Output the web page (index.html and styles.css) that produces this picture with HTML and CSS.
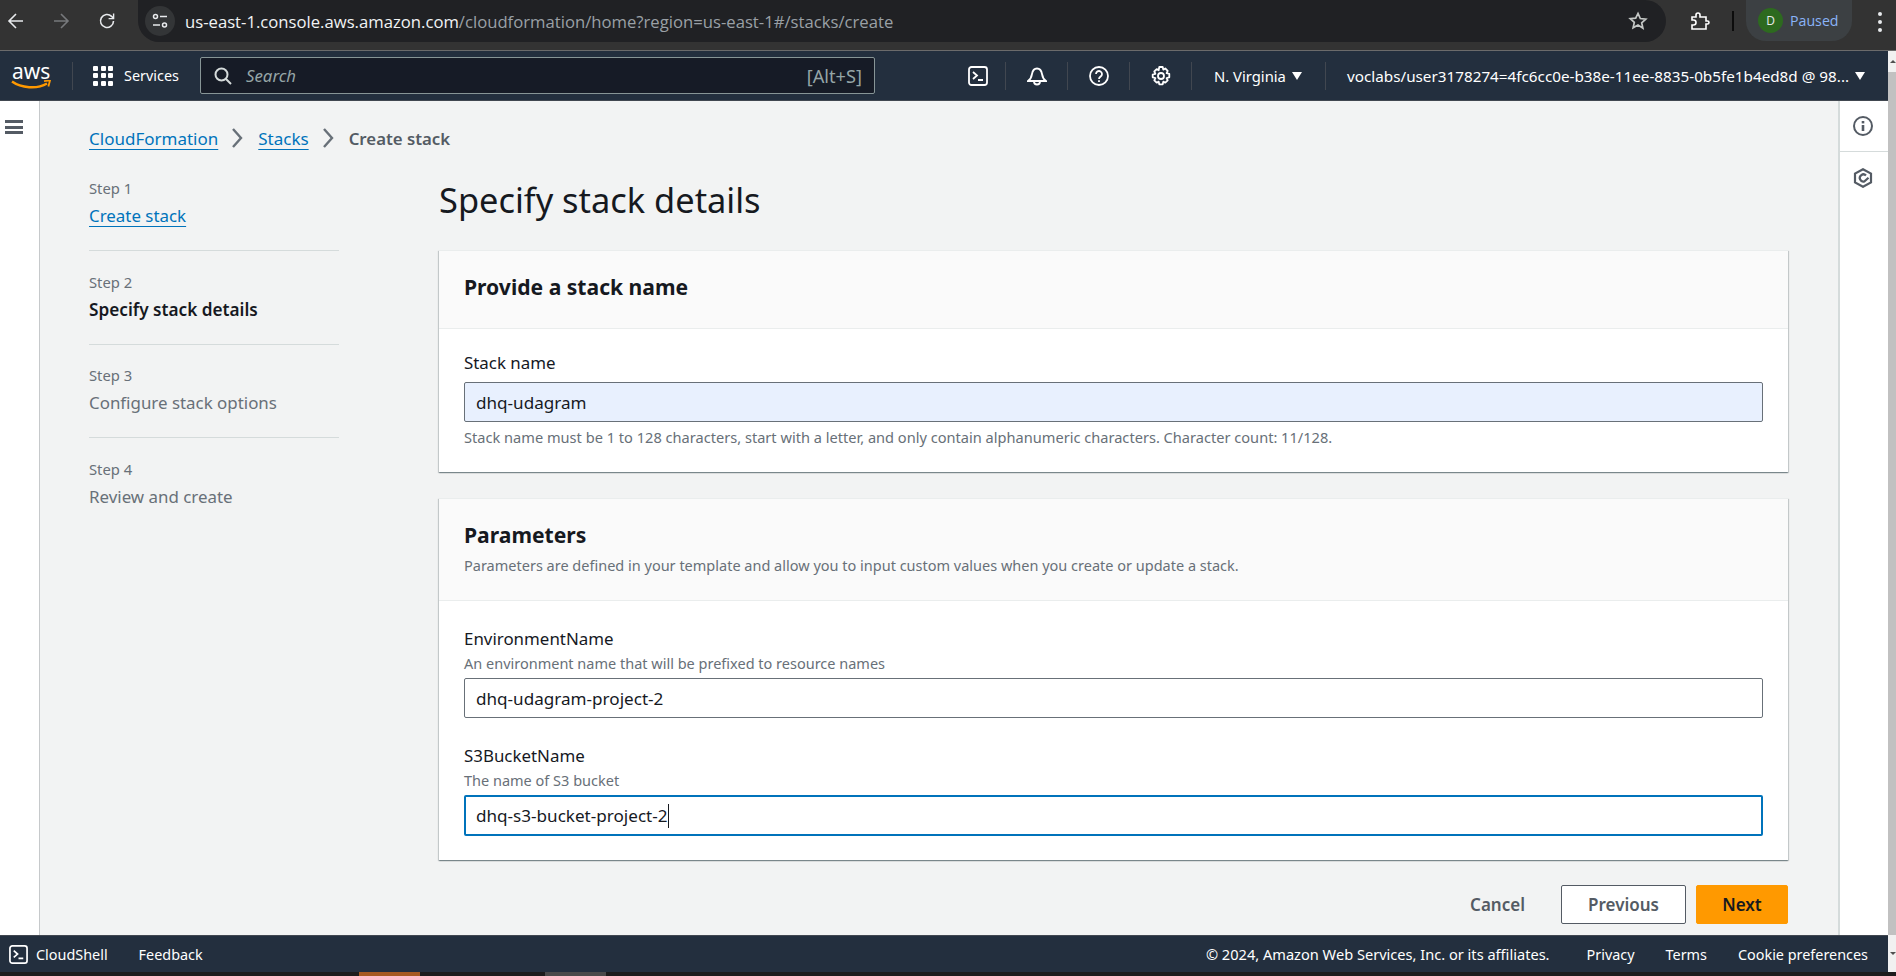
FILE: index.html
```html
<!doctype html>
<html lang="en">
    <head>
        <meta charset="UTF-8" />
        <meta name="viewport" content="width=device-width, initial-scale=1.0" />
        <title>CloudFormation - Create stack</title>
        <link rel="stylesheet" href="styles.css">
    </head>
    <body>
        <!-- browser toolbar -->
        <div class="browser-bar">
            <div class="browser-btn">
                <svg width="18" height="18" viewBox="0 0 18 18" fill="none" stroke="#e8eaed" stroke-width="1.6"><path d="M16 9H2M9 2L2 9l7 7"/></svg>
            </div>
            <div class="browser-btn">
                <svg width="18" height="18" viewBox="0 0 18 18" fill="none" stroke="#77797c" stroke-width="1.6"><path d="M2 9h14M9 2l7 7-7 7"/></svg>
            </div>
            <div class="browser-btn">
                <svg width="18" height="18" viewBox="0 0 18 18" fill="none" stroke="#e8eaed" stroke-width="1.6"><path d="M15.5 9A6.5 6.5 0 1 1 13.6 4.4L15.5 6.2"/><path d="M15.6 1.6v5h-5" stroke-width="1.4"/></svg>
            </div>
            <div class="url-pill">
                <div class="site-icon">
                    <svg width="18" height="18" viewBox="0 0 18 18" fill="none" stroke="#e8eaed" stroke-width="1.5"><circle cx="4.5" cy="4.5" r="2"/><path d="M9 4.5h7M2 13h7"/><circle cx="13.5" cy="13" r="2"/></svg>
                </div>
                <div class="url"><span class="url-host">us-east-1.console.aws.amazon.com</span>/cloudformation/home?region=us-east-1#/stacks/create</div>
                <svg class="star" width="20" height="20" viewBox="0 0 20 20" fill="none" stroke="#c4c7c5" stroke-width="1.7"><path d="M10 2.4l2.3 5.1 5.5.6-4.1 3.7 1.2 5.4L10 14.1l-4.9 2.7 1.2-5.4-4.1-3.7 5.5-.6z"/></svg>
            </div>
            <svg class="ext-icon" width="20" height="20" viewBox="0 0 20 20" fill="none" stroke="#fff" stroke-width="1.6"><path d="M2 6h4V4a2 2 0 0 1 4 0v2h6v4h1.5a1.5 1.5 0 0 1 0 3H16v5H2v-4h1.5a2.5 2.5 0 0 0 0-5H2z"/></svg>
            <div class="bar-divider"></div>
            <div class="profile">
                <div class="avatar">D</div>
                <span>Paused</span>
            </div>
            <div class="browser-menu"><i></i><i></i><i></i></div>
        </div>

        <div class="window">
            <div class="app">
                <!-- console top nav -->
                <header class="topnav">
                    <div class="logo">
                        <span class="logo-text">aws</span>
                        <svg width="40" height="10" viewBox="0 0 40 10" fill="none"><path d="M1 1.5C10 8 26 9.5 36 3.5" stroke="#f90" stroke-width="2.4"/><path d="M33 1.2l6-.8-1.6 6" stroke="#f90" stroke-width="1.8"/></svg>
                    </div>
                    <div class="services">
                        <div class="grid-icon"><i></i><i></i><i></i><i></i><i></i><i></i><i></i><i></i><i></i></div>
                        <span>Services</span>
                    </div>
                    <div class="search">
                        <svg width="18" height="18" viewBox="0 0 18 18" fill="none" stroke="#d5dbdb" stroke-width="2"><circle cx="7.5" cy="7.5" r="6"/><path d="M12 12l5 5"/></svg>
                        <span class="search-text">Search</span>
                        <span class="search-key">[Alt+S]</span>
                    </div>
                    <div class="nav-icon first">
                        <svg width="20" height="20" viewBox="0 0 20 20" fill="none" stroke="#fff" stroke-width="1.8"><rect x="1" y="1" width="18" height="18" rx="2.5"/><path d="M5 6l4 3.5L5 13M10 14h5"/></svg>
                    </div>
                    <div class="nav-icon">
                        <svg width="20" height="20" viewBox="0 0 20 20" fill="none" stroke="#fff" stroke-width="1.8"><path d="M1 15h18c-3-2-3.500-4-4-7-.5-3-2-5.500-5-5.500S5.500 5 5 8c-.5 3-1 5-4 7z"/><path d="M7 15.500a3 3 0 0 0 6 0"/></svg>
                    </div>
                    <div class="nav-icon">
                        <svg width="20" height="20" viewBox="0 0 20 20" fill="none" stroke="#fff" stroke-width="1.8"><circle cx="10" cy="10" r="9"/><path d="M7 8a3 3 0 1 1 4.500 2.600c-1 .6-1.500 1.100-1.500 2.400"/><path d="M10 14.300v1.700"/></svg>
                    </div>
                    <div class="nav-icon">
                        <svg width="20" height="20" viewBox="0 0 20 20" fill="none" stroke="#fff" stroke-width="1.8"><circle cx="10" cy="10" r="3"/><path d="M8.300 1h3.400l.6 2.600 2-1.100 2.400 2.400-1.100 2.300 2.700.7v3.400l-2.700.7 1.100 2.300-2.400 2.400-2-1.100-.6 2.700H8.300l-.6-2.700-2 1.100-2.400-2.400 1.100-2.300-2.700-.7V8.500l2.700-.7-1.100-2.300 2.400-2.400 2 1.100z" stroke-linejoin="round"/></svg>
                    </div>
                    <div class="nav-menu region">N. Virginia <span class="caret-down"></span></div>
                    <div class="nav-menu user"><span class="user-name">voclabs/user3178274=4fc6cc0e-b38e-11ee-8835-0b5fe1b4ed8d @ 98...</span> <span class="caret-down"></span></div>
                </header>

                <div class="main">
                    <div class="left-rail">
                        <div class="hamburger"><i></i><i></i><i></i></div>
                    </div>

                    <div class="content">
                        <nav class="breadcrumbs">
                            <a href="#">CloudFormation</a>
                            <svg width="16" height="22" viewBox="0 0 16 22" fill="none" stroke="#687078" stroke-width="2.400"><path d="M3 2l8 9-8 9"/></svg>
                            <a href="#">Stacks</a>
                            <svg width="16" height="22" viewBox="0 0 16 22" fill="none" stroke="#687078" stroke-width="2.400"><path d="M3 2l8 9-8 9"/></svg>
                            <span class="crumb-current">Create stack</span>
                        </nav>

                        <div class="wizard">
                            <ul class="steps">
                                <li class="step">
                                    <div class="step-num">Step 1</div>
                                    <a class="step-name" href="#">Create stack</a>
                                </li>
                                <li class="step">
                                    <div class="step-num">Step 2</div>
                                    <div class="step-name active">Specify stack details</div>
                                </li>
                                <li class="step">
                                    <div class="step-num">Step 3</div>
                                    <div class="step-name">Configure stack options</div>
                                </li>
                                <li class="step">
                                    <div class="step-num">Step 4</div>
                                    <div class="step-name">Review and create</div>
                                </li>
                            </ul>

                            <div class="form-col">
                                <h1>Specify stack details</h1>

                                <section class="card">
                                    <div class="card-header name-header">
                                        <h2>Provide a stack name</h2>
                                    </div>
                                    <div class="card-body first-body">
                                        <div class="field">
                                            <label>Stack name</label>
                                            <div class="input autofill">dhq-udagram</div>
                                            <div class="hint">Stack name must be 1 to 128 characters, start with a letter, and only contain alphanumeric characters. Character count: 11/128.</div>
                                        </div>
                                    </div>
                                </section>

                                <section class="card params">
                                    <div class="card-header">
                                        <h2>Parameters</h2>
                                        <p class="card-desc">Parameters are defined in your template and allow you to input custom values when you create or update a stack.</p>
                                    </div>
                                    <div class="card-body">
                                        <div class="field">
                                            <label>EnvironmentName</label>
                                            <div class="field-desc">An environment name that will be prefixed to resource names</div>
                                            <div class="input">dhq-udagram-project-2</div>
                                        </div>
                                        <div class="field">
                                            <label>S3BucketName</label>
                                            <div class="field-desc">The name of S3 bucket</div>
                                            <div class="input focused"><span class="typed">dhq-s3-bucket-project-2</span></div>
                                        </div>
                                    </div>
                                </section>

                                <div class="actions">
                                    <button class="btn-link">Cancel</button>
                                    <button class="btn-normal">Previous</button>
                                    <button class="btn-primary">Next</button>
                                </div>
                            </div>
                        </div>
                    </div>

                    <aside class="right-rail">
                        <div class="rail-item">
                            <svg width="20" height="20" viewBox="0 0 20 20" fill="none" stroke="#545b64" stroke-width="2"><circle cx="10" cy="10" r="9"/><path d="M10 9v6" stroke-width="2.600"/><path d="M10 5v2.400" stroke-width="2.600"/></svg>
                        </div>
                        <div class="rail-item">
                            <svg width="20" height="20" viewBox="0 0 20 20" fill="none" stroke="#545b64" stroke-width="2.200"><path d="M10 1.200l8 4.400v8.800l-8 4.400-8-4.400V5.600z"/><path d="M13 7.500A3.600 3.600 0 1 0 11.500 13.400L15.500 9.800"/></svg>
                        </div>
                    </aside>
                </div>

                <footer class="footer">
                    <svg width="19" height="19" viewBox="0 0 20 20" fill="none" stroke="#fff" stroke-width="1.800"><rect x="1" y="1" width="18" height="18" rx="2.500"/><path d="M5 6l4 3.500L5 13M10 14h5"/></svg>
                    <span class="cloudshell">CloudShell</span>
                    <span class="feedback">Feedback</span>
                    <span class="copyright">© 2024, Amazon Web Services, Inc. or its affiliates.</span>
                    <span class="foot-link">Privacy</span>
                    <span class="foot-link">Terms</span>
                    <span class="foot-link">Cookie preferences</span>
                </footer>
            </div>

            <div class="scrollbar">
                <div class="scroll-arrow"><span class="arrow-up"></span></div>
                <div class="scroll-thumb"></div>
                <div class="scroll-arrow bottom"><span class="arrow-down"></span></div>
            </div>
        </div>

        <div class="taskbar">
            <div class="task orange"></div>
            <div class="task grey"></div>
        </div>
    </body>
</html>
```

FILE: styles.css
```css
* {
    box-sizing: border-box;
}
html,
body {
    height: 100%;
}
body {
    margin: 0;
    height: 976px;
    overflow: hidden;
    display: flex;
    flex-direction: column;
    font-family: "Noto Sans", sans-serif;
    font-size: 16.9px;
    color: #16191f;
    background: #f2f3f3;
}

/* browser toolbar */
.browser-bar {
    height: 51px;
    flex: none;
    display: flex;
    align-items: flex-start;
    background: #333333;
    border-bottom: 1px solid #6b6b6b;
    font-family: "Open Sans", sans-serif;
}
.browser-btn {
    width: 46px;
    height: 42px;
    display: flex;
    align-items: center;
    justify-content: center;
    flex: none;
}
.browser-btn:first-child {
    width: 32px;
    margin-right: 6px;
}
.url-pill {
    width: 1528px;
    height: 42px;
    margin-left: 8px;
    padding-left: 7px;
    display: flex;
    align-items: center;
    flex: none;
    background: #202124;
    border-radius: 0 21px 21px 21px;
}
.site-icon {
    width: 30px;
    height: 30px;
    border-radius: 50%;
    background: #333537;
    display: flex;
    align-items: center;
    justify-content: center;
    flex: none;
}
.url {
    margin-left: 10px;
    font-size: 16.680px;
    color: #9aa0a6;
    white-space: nowrap;
}
.url-host {
    color: #f1f3f4;
}
.star {
    margin-left: auto;
    margin-right: 18px;
}
.ext-icon {
    margin: 11px 0 0 24px;
    flex: none;
}
.bar-divider {
    width: 2px;
    height: 20px;
    margin: 11px 0 0 22px;
    background: #0c0c0c;
    flex: none;
}
.profile {
    width: 106px;
    height: 41px;
    margin-left: 12px;
    padding-left: 12px;
    display: flex;
    align-items: center;
    gap: 7px;
    flex: none;
    background: #3c4043;
    border-radius: 0 0 20px 20px;
    color: #8ab4f8;
    font-size: 14.200px;
}
.avatar {
    width: 25px;
    height: 25px;
    border-radius: 50%;
    background: #2d6a1f;
    color: #e8eaed;
    font-size: 12px;
    text-align: center;
    line-height: 25px;
}
.browser-menu {
    margin: 12px 0 0 26px;
    display: flex;
    flex-direction: column;
    gap: 4px;
}
.browser-menu i {
    width: 4px;
    height: 4px;
    border-radius: 50%;
    background: #e8eaed;
}

/* console frame */
.window {
    flex: 1;
    display: flex;
    min-height: 0;
}
.app {
    flex: 1;
    min-width: 0;
    display: flex;
    flex-direction: column;
}
.scrollbar {
    width: 8px;
    flex: none;
    display: flex;
    flex-direction: column;
    background: #f1f1f1;
}
.scroll-arrow {
    height: 21px;
    display: flex;
    align-items: center;
    justify-content: flex-end;
}
.scroll-arrow.bottom {
    flex: 1;
}
.arrow-up {
    border-left: 3px solid transparent;
    border-right: 3px solid transparent;
    border-bottom: 3px solid #505050;
}
.arrow-down {
    border-left: 3px solid transparent;
    border-right: 3px solid transparent;
    border-top: 3px solid #505050;
}
.scroll-thumb {
    height: 863px;
    background: #c1c1c1;
}

/* top nav */
.topnav {
    height: 50px;
    flex: none;
    display: flex;
    align-items: center;
    background: #232f3e;
    border-bottom: 1px solid #414750;
    color: #fff;
    font-size: 14.400px;
    white-space: nowrap;
}
.logo {
    width: 73px;
    height: 28px;
    padding-left: 11px;
    border-right: 1px solid #414750;
    display: flex;
    flex-direction: column;
    flex: none;
}
.logo-text {
    font-size: 21px;
    line-height: 18px;
    margin-left: 1px;
}
.services {
    width: 127px;
    display: flex;
    align-items: center;
    gap: 11px;
    padding-left: 20px;
    flex: none;
}
.grid-icon {
    display: grid;
    grid-template-columns: repeat(3, 5px);
    grid-auto-rows: 5px;
    gap: 2.500px;
}
.grid-icon i {
    background: #fff;
    border-radius: 1px;
}
.search {
    width: 675px;
    height: 37px;
    padding: 0 12px 0 13px;
    display: flex;
    align-items: center;
    flex: none;
    background: #161b26;
    border: 1px solid #879596;
    border-radius: 2px;
    color: #95a5a6;
    font-size: 16.800px;
}
.search-text {
    margin-left: 14px;
    font-style: italic;
}
.search-key {
    margin-left: auto;
    font-size: 18.200px;
}
.nav-icon {
    width: 62px;
    height: 28px;
    display: flex;
    align-items: center;
    justify-content: center;
    border-right: 1px solid #414750;
    flex: none;
}
.nav-icon.first {
    width: 56px;
    margin-left: 75px;
}
.nav-menu {
    height: 28px;
    display: flex;
    align-items: center;
    flex: none;
}
.region {
    width: 134px;
    padding-left: 22px;
    border-right: 1px solid #414750;
    gap: 6px;
    font-size: 14.800px;
}
.user {
    padding-left: 21px;
    gap: 6px;
    font-size: 15.250px;
}
.caret-down {
    width: 0;
    height: 0;
    border-left: 5px solid transparent;
    border-right: 5px solid transparent;
    border-top: 8px solid #fff;
}

/* main area */
.main {
    flex: 1;
    min-height: 0;
    display: flex;
}
.left-rail {
    width: 40px;
    flex: none;
    background: #fff;
    border-right: 1px solid #c6c9cb;
    padding: 19px 0 0 5px;
}
.hamburger {
    display: flex;
    flex-direction: column;
    gap: 2.500px;
    width: 18px;
}
.hamburger i {
    height: 3px;
    background: #545b64;
}
.content {
    flex: 1;
    min-width: 0;
    padding: 23px 50px 0 49px;
}
.right-rail {
    width: 50px;
    flex: none;
    background: #fff;
    border-left: 2px solid #d5dbdb;
}
.rail-item {
    height: 51px;
    padding-right: 2px;
    display: flex;
    align-items: center;
    justify-content: center;
}
.rail-item:first-child {
    border-bottom: 1px solid #d5dbdb;
}

/* breadcrumbs */
.breadcrumbs {
    height: 28px;
    display: flex;
    align-items: center;
    gap: 12px;
    font-size: 17px;
}
a {
    color: #0073bb;
    text-underline-offset: 4px;
    text-decoration-thickness: 1px;
}
.crumb-current {
    color: #545b64;
    font-weight: 600;
    font-size: 16.800px;
}

/* wizard */
.wizard {
    margin-top: 23px;
    display: grid;
    grid-template-columns: 250px 1349px;
    column-gap: 100px;
}
.steps {
    list-style: none;
    margin: 0;
    padding: 2px 0 0;
}
.step {
    padding-bottom: 20px;
    margin-bottom: 19.500px;
    border-bottom: 1px solid #d5dbdb;
}
.step:last-child {
    border-bottom: none;
}
.step-num {
    font-size: 14.800px;
    line-height: 22px;
    color: #687078;
}
.step-name {
    display: block;
    margin-top: 3px;
    line-height: 28px;
    color: #687078;
}
.step-name.active {
    color: #16191f;
    font-weight: 600;
    font-size: 17.200px;
}
a.step-name {
    color: #0073bb;
}

/* form */
h1 {
    margin: 5px 0 30px;
    font-size: 34.400px;
    line-height: 40px;
    font-weight: 400;
}
.card {
    background: #fff;
    box-shadow: 0 1px 1px 0 rgba(0, 28, 36, 0.3), 1px 1px 1px 0 rgba(0, 28, 36, 0.15), -1px 1px 1px 0 rgba(0, 28, 36, 0.15);
    border-top: 1px solid #eaeded;
}
.params {
    margin-top: 26px;
}
.card-header {
    padding: 22px 25px 25px;
    background: #fafafa;
    border-bottom: 1px solid #eaeded;
}
.name-header {
    padding-top: 22px;
    padding-bottom: 27px;
}
h2 {
    margin: 0;
    font-size: 21.100px;
    line-height: 28px;
    font-weight: 700;
}
.card-desc {
    margin: 6px 0 0;
    font-size: 14.500px;
    line-height: 20px;
    color: #687078;
}
.card-body {
    padding: 26px 25px 24px;
}
.first-body {
    padding-top: 22px;
    padding-bottom: 25px;
}
.field + .field {
    margin-top: 26px;
}
label {
    display: block;
    line-height: 24px;
}
.field-desc {
    margin: 2px 0 5px;
    font-size: 14.500px;
    line-height: 20px;
    color: #687078;
}
.first-body label {
    margin-bottom: 7px;
}
.input {
    height: 40px;
    padding: 0 11px;
    display: flex;
    align-items: center;
    font-size: 17.100px;
    background: #fff;
    border: 1px solid #687078;
    border-radius: 2px;
}
.input.autofill {
    background: #e8f0fe;
}
.input.focused {
    height: 41px;
    padding: 0 10px;
    border: 2px solid #0073bb;
}
.typed {
    border-right: 1px solid #16191f;
    line-height: 24px;
}
.hint {
    margin-top: 5px;
    font-size: 14.600px;
    line-height: 20px;
    color: #687078;
}

/* buttons */
.actions {
    margin-top: 25px;
    display: flex;
    justify-content: flex-end;
    align-items: center;
}
button {
    height: 39px;
    font-family: inherit;
    font-size: 17px;
    font-weight: 600;
    border-radius: 2px;
    cursor: pointer;
}
.btn-link {
    background: none;
    border: none;
    color: #545b64;
    margin-right: 36px;
    padding: 0;
}
.btn-normal {
    width: 125px;
    background: #fff;
    border: 1px solid #545b64;
    color: #545b64;
}
.btn-primary {
    width: 92px;
    margin-left: 10px;
    background: #ff9900;
    border: 1px solid #ff9900;
    color: #16191f;
}

/* footer */
.footer {
    height: 37px;
    flex: none;
    padding: 0 20px 0 9px;
    display: flex;
    align-items: center;
    background: #232f3e;
    border-top: 1px solid #414750;
    color: #fff;
    font-size: 14.400px;
    white-space: nowrap;
}
.cloudshell {
    margin-left: 8px;
}
.feedback {
    margin-left: 31px;
}
.copyright {
    margin-left: auto;
    margin-right: 6px;
    font-size: 14.600px;
}
.foot-link {
    margin-left: 31px;
}

/* bit of the taskbar under the window */
.taskbar {
    height: 4px;
    flex: none;
    padding-left: 359px;
    display: flex;
    background: #1c1c1c;
}
.task {
    width: 61px;
}
.orange {
    background: #a65a20;
}
.grey {
    margin-left: 125px;
    background: #4a4a4a;
}
```
